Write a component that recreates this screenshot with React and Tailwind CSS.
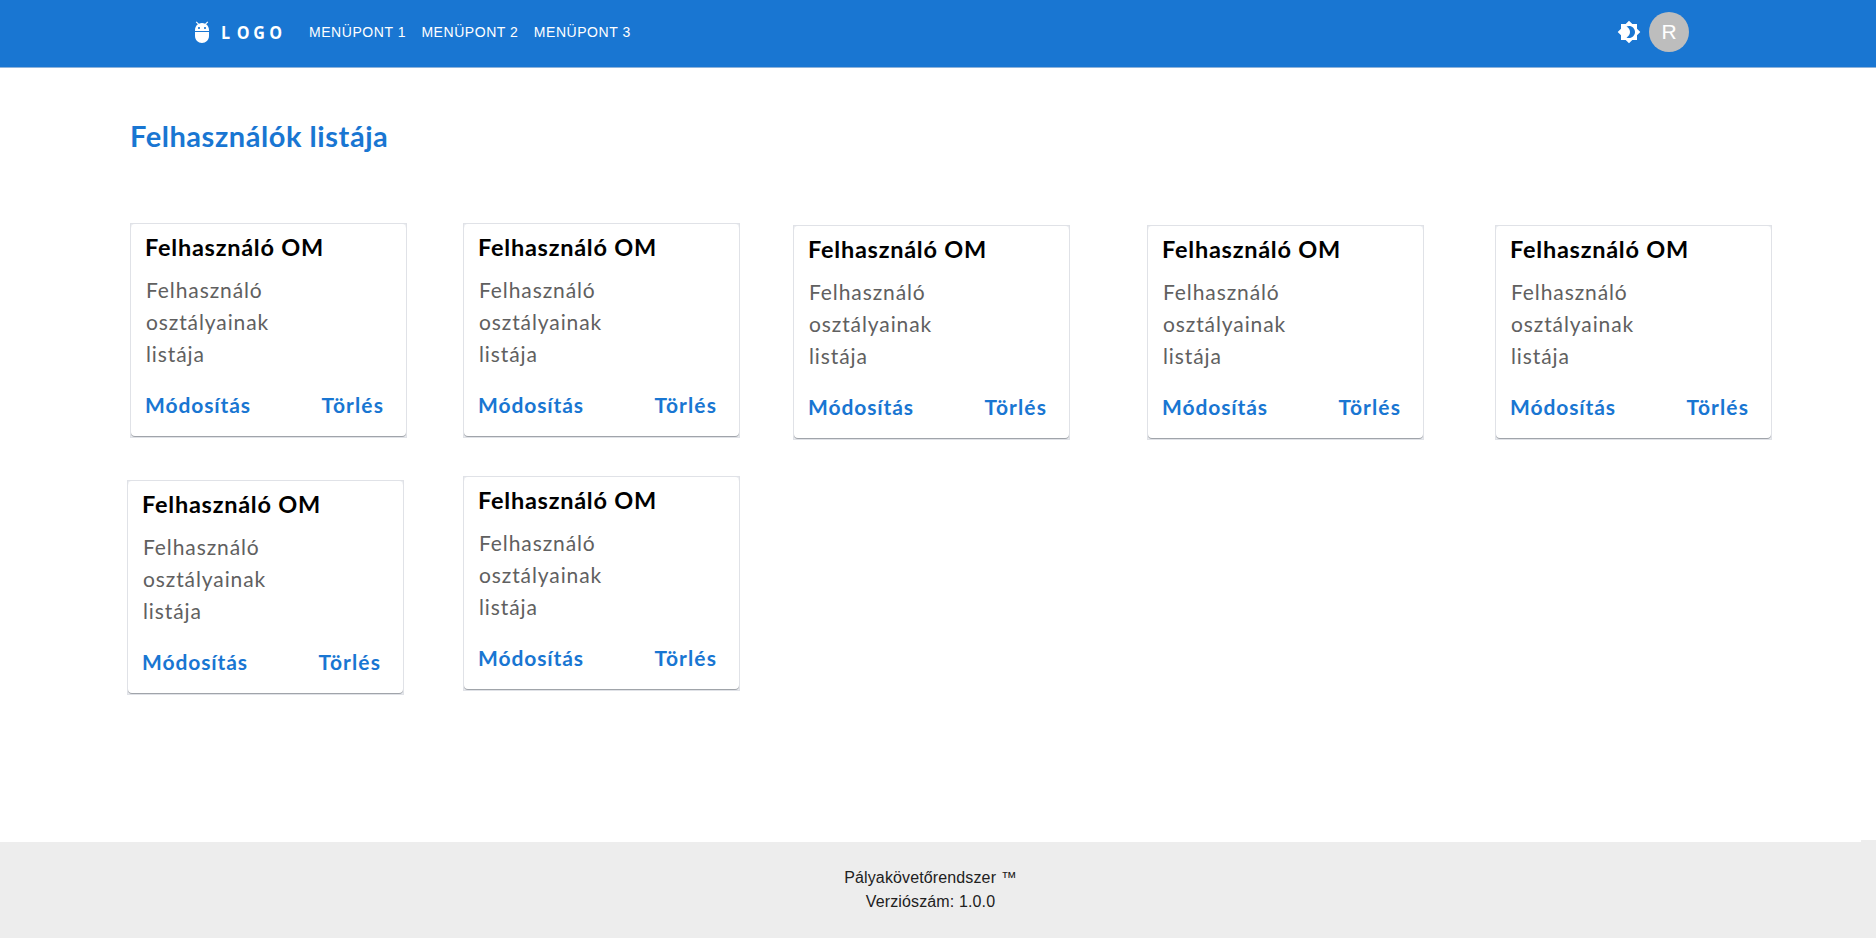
import { MdAdb, MdBrightness4 } from "react-icons/md";

const menu = ["MENÜPONT 1", "MENÜPONT 2", "MENÜPONT 3"];

function UserCard({ className = "" }) {
  return (
    <article
      className={`flex h-[215px] w-[277px] shrink-0 flex-col border border-[#e0e2e7] bg-[#e9ebef] font-[Lato,sans-serif] ${className}`}
    >
      <div className="flex h-[212px] flex-col rounded-[4px] bg-white pl-[14px] pr-[22px] pt-[7px] shadow-[0_1px_0_#a0a4aa]">
        <h2 className="h-8 whitespace-nowrap text-[23.5px] font-bold leading-8 tracking-[0.75px] text-black">
          Felhasználó OM
        </h2>
        <p className="mt-[11px] w-[160px] pl-px text-[21px] leading-8 tracking-[0.9px] text-[#606060]">
          Felhasználó osztályainak listája
        </p>
        <div className="mt-[19px] flex justify-between text-[21px] font-bold leading-8 text-[#1976d2]">
          <button className="tracking-[0.9px]">Módosítás</button>
          <button className="tracking-[1.1px]">Törlés</button>
        </div>
      </div>
    </article>
  );
}

export default function App() {
  return (
    <div className="flex h-[938px] flex-col overflow-hidden bg-white font-['Liberation_Sans',Arial,sans-serif]">
      <header className="flex h-[68px] shrink-0 items-center border-b border-[#8fb3da] bg-[#1976d2] pb-[3px] pl-[190px] pr-[187px] text-white">
        <MdAdb className="size-6" />
        <span className="ml-[7px] w-[88px] origin-left scale-x-[0.87] whitespace-nowrap font-['Open_Sans',sans-serif] text-[18.5px] font-bold tracking-[4.2px]">
          <span className="tracking-[7.6px]">L</span>O
          <span className="tracking-[5px]">G</span>O
        </span>
        <nav className="flex gap-4 text-[14px] tracking-[0.55px]">
          {menu.map((m) => (
            <a key={m} className="w-[96.4px] whitespace-nowrap">
              {m}
            </a>
          ))}
        </nav>
        <MdBrightness4 className="ml-auto size-6" />
        <div className="ml-2 flex size-10 items-center justify-center rounded-full bg-[#bdbdbd] text-[21px]">
          R
        </div>
      </header>

      <main className="flex flex-1 flex-col">
        <h1 className="ml-[130px] mt-[48px] h-10 whitespace-nowrap font-[Lato,sans-serif] text-[29px] font-bold leading-10 tracking-[0.55px] text-[#1976d2]">
          Felhasználók listája
        </h1>
        <section className="mt-[67px] flex items-start pl-[130px]">
          <UserCard />
          <UserCard className="ml-[56px]" />
          <UserCard className="ml-[53px] mt-[2px]" />
          <UserCard className="ml-[77px] mt-[2px]" />
          <UserCard className="ml-[71px] mt-[2px]" />
        </section>
        <section className="mt-[36px] flex items-start pl-[127px]">
          <UserCard className="mt-[4px]" />
          <UserCard className="ml-[59px]" />
        </section>
      </main>

      <footer className="flex h-[98px] shrink-0 items-end">
        <div className="h-24 w-[1861px] bg-[#ededed] pt-6 text-center text-[16px] leading-6 tracking-[0.13px] text-[#212121]">
          <p>Pályakövetőrendszer ™</p>
          <p>Verziószám: 1.0.0</p>
        </div>
        <div className="h-[98px] flex-1 bg-[#ededed]" />
      </footer>
    </div>
  );
}
